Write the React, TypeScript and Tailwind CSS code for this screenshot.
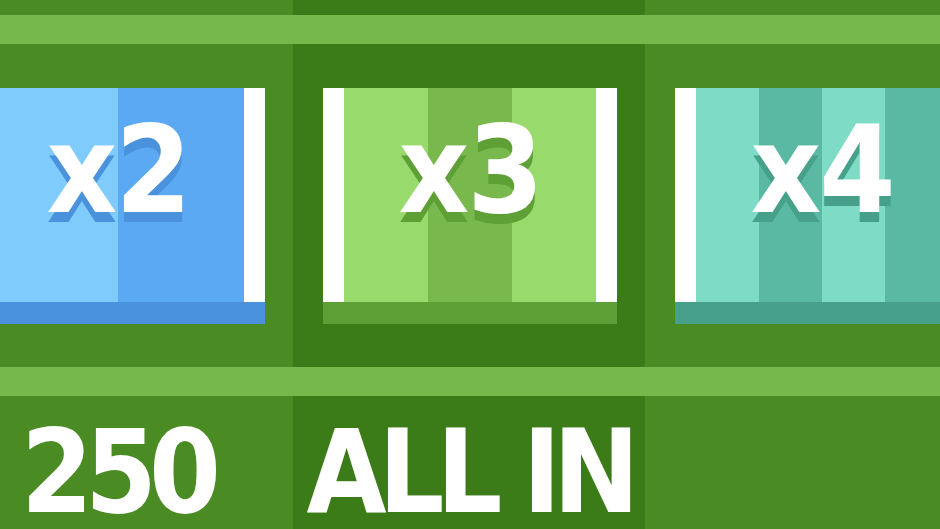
// Bet multiplier picker: a row of striped multiplier cards over the stake row.

type Card = {
  label: string
  light: string
  dark: string
  base: string
  shade: string
}

const cards: Card[] = [
  { label: "x2", light: "bg-[#7ecbfc]", dark: "bg-[#5aa9f2]", base: "bg-[#4a92dc]", shade: "[text-shadow:0_10px_0_#4a92dc]" },
  { label: "x3", light: "bg-[#98da6c]", dark: "bg-[#78b84c]", base: "bg-[#5e9f36]", shade: "[text-shadow:0_10px_0_#5e9f36]" },
  { label: "x4", light: "bg-[#7edcc6]", dark: "bg-[#5ab9a3]", base: "bg-[#46a08a]", shade: "[text-shadow:0_10px_0_#46a08a]" },
]

const stakes = ["250", "ALL IN", ""]

// selected column is the middle one
const cellBg = (i: number) => (i === 1 ? "bg-[#3c7c18]" : "bg-[#4a8b23]")

const pixelFont =
  "font-['DejaVu_Sans_Condensed','DejaVu_Sans',sans-serif] font-stretch-condensed font-bold text-white whitespace-nowrap"

function MultiplierCard({ card, stripes }: { card: Card; stripes: number }) {
  return (
    <div className="flex flex-col">
      <div className="flex h-[214px]">
        <div className="w-[21px] bg-white" />
        <div className="grid flex-1">
          <div className="flex [grid-area:1/1]">
            {Array.from({ length: stripes }, (_, i) => (
              <div key={i} className={`flex-1 ${i % 2 === 0 ? card.light : card.dark}`} />
            ))}
          </div>
          <div
            className={`[grid-area:1/1] pt-[21px] text-center text-[122px] leading-none tracking-[-2px] ${pixelFont} ${card.shade}`}
          >
            {card.label}
          </div>
        </div>
        <div className="w-[21px] bg-white" />
      </div>
      <div className={`h-[22px] ${card.base}`} />
    </div>
  )
}

export default function App() {
  return (
    <div className="h-[529px] w-[940px] overflow-hidden bg-[#4a8b23]">
      <div className="-ml-[59px] flex w-[1056px] flex-col">
        <div className="flex h-[15px]">
          {[0, 1, 2].map((i) => (
            <div key={i} className={`w-[352px] ${cellBg(i)}`} />
          ))}
        </div>
        <div className="h-[29px] bg-[#76b84c]" />
        <div className="flex h-[323px]">
          {cards.map((card, i) => (
            <div key={card.label} className={`w-[352px] pl-[30px] pr-[28px] pt-[44px] ${cellBg(i)}`}>
              <MultiplierCard card={card} stripes={i + 2} />
            </div>
          ))}
        </div>
        <div className="h-[29px] bg-[#76b84c]" />
        <div className="flex h-[133px]">
          {stakes.map((s, i) => (
            <div
              key={i}
              className={`w-[352px] pt-[30px] text-center text-[115px] leading-[0.8] tracking-[-8px] ${pixelFont} ${cellBg(i)}`}
            >
              {s}
            </div>
          ))}
        </div>
      </div>
    </div>
  )
}
